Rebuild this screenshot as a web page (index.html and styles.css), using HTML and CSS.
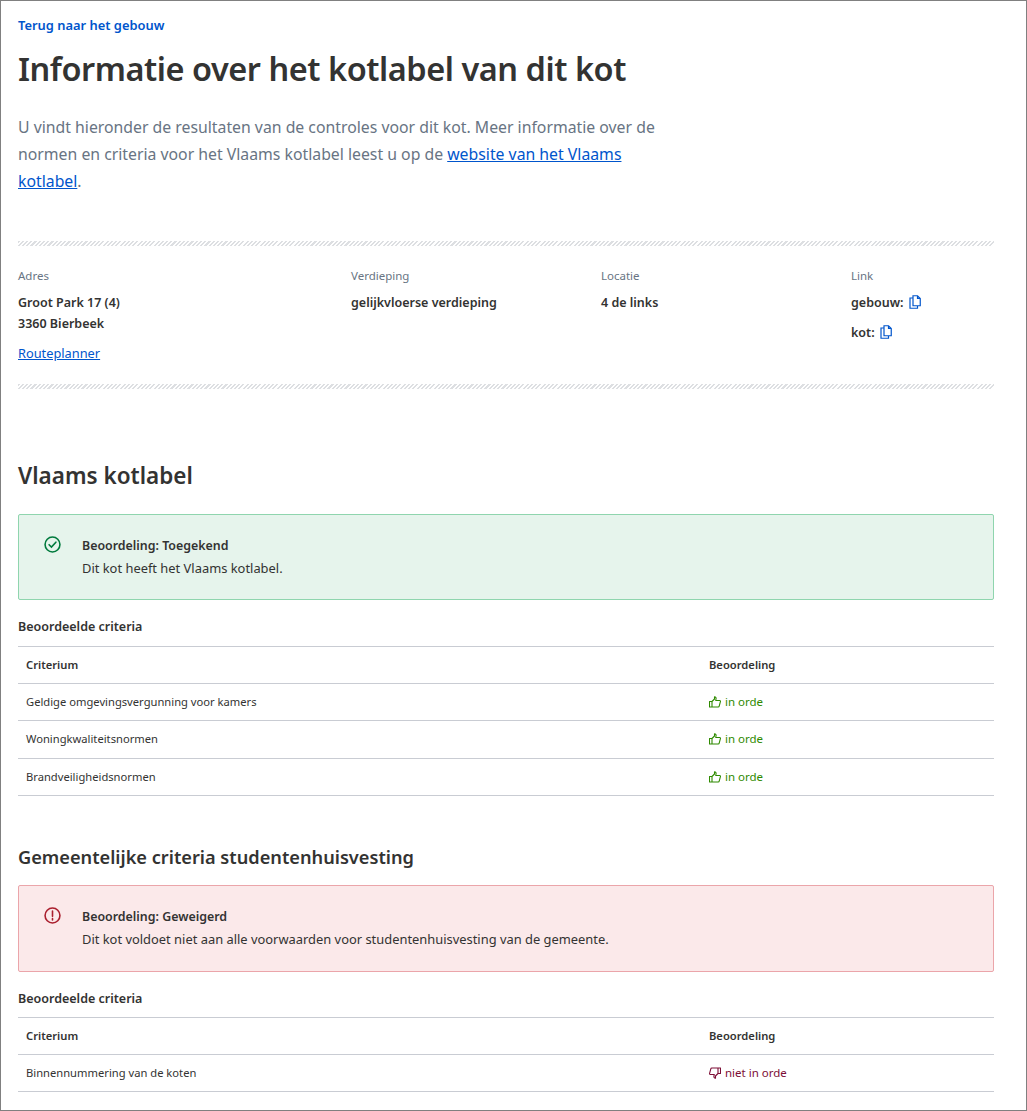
FILE: index.html
```html
<!DOCTYPE html>
<html lang="nl">
<head>
  <meta charset="UTF-8">
  <title>Informatie over het kotlabel van dit kot</title>
  <link rel="stylesheet" href="styles.css">
</head>
<body>
  <main class="page">
    <a class="back-link" href="#">Terug naar het gebouw</a>
    <h1>Informatie over het kotlabel van dit kot</h1>
    <p class="intro">U vindt hieronder de resultaten van de controles voor dit kot. Meer informatie over de normen en criteria voor het Vlaams kotlabel leest u op de <a href="#">website van het Vlaams kotlabel</a>.</p>

    <div class="hatch hatch-top"></div>
    <div class="meta">
      <div>
        <div class="meta-label">Adres</div>
        <div class="meta-value">Groot Park 17 (4)</div>
        <div class="meta-value meta-second">3360 Bierbeek</div>
        <a class="route" href="#">Routeplanner</a>
      </div>
      <div>
        <div class="meta-label">Verdieping</div>
        <div class="meta-value">gelijkvloerse verdieping</div>
      </div>
      <div>
        <div class="meta-label">Locatie</div>
        <div class="meta-value">4 de links</div>
      </div>
      <div>
        <div class="meta-label">Link</div>
        <div class="meta-value copy-row">gebouw:
          <svg class="copy" viewBox="0 0 12 14"><path d="M4 .75h4.5L11.25 3.5v7.25H4zM8.5.75V3.5h2.75M4 3H1v10.25h7.5v-2.5"/></svg>
        </div>
        <div class="meta-value copy-row copy-second">kot:
          <svg class="copy" viewBox="0 0 12 14"><path d="M4 .75h4.5L11.25 3.5v7.25H4zM8.5.75V3.5h2.75M4 3H1v10.25h7.5v-2.5"/></svg>
        </div>
      </div>
    </div>
    <div class="hatch"></div>

    <h2>Vlaams kotlabel</h2>
    <div class="alert alert-ok">
      <svg class="alert-icon" viewBox="0 0 16 16"><circle cx="8" cy="8" r="7"/><path d="M4.8 8.2l2.2 2.2 4.2-4.6"/></svg>
      <div>
        <div class="alert-title">Beoordeling: Toegekend</div>
        <div class="alert-text">Dit kot heeft het Vlaams kotlabel.</div>
      </div>
    </div>
    <h3>Beoordeelde criteria</h3>
    <table>
      <tr><th class="col-main">Criterium</th><th>Beoordeling</th></tr>
      <tr>
        <td>Geldige omgevingsvergunning voor kamers</td>
        <td class="good"><svg class="thumb" viewBox="0 0 12 12"><path d="M.5 5.5h2.5v5.5H.5zM3 5.5l2.5-2.5V.8c1.3 0 1.8 1 1.5 2.2L6.700 4.500h4c.7 0 .9.6.7 1.200l-1.200 4.500c-.1.500-.5.800-1 .8H3"/></svg> in orde</td>
      </tr>
      <tr>
        <td>Woningkwaliteitsnormen</td>
        <td class="good"><svg class="thumb" viewBox="0 0 12 12"><path d="M.5 5.5h2.5v5.5H.5zM3 5.5l2.5-2.5V.8c1.3 0 1.8 1 1.5 2.2L6.700 4.500h4c.7 0 .9.6.7 1.200l-1.200 4.500c-.1.500-.5.800-1 .8H3"/></svg> in orde</td>
      </tr>
      <tr>
        <td>Brandveiligheidsnormen</td>
        <td class="good"><svg class="thumb" viewBox="0 0 12 12"><path d="M.5 5.5h2.5v5.5H.5zM3 5.5l2.5-2.5V.8c1.3 0 1.8 1 1.5 2.2L6.700 4.500h4c.7 0 .9.6.7 1.200l-1.200 4.500c-.1.500-.5.800-1 .8H3"/></svg> in orde</td>
      </tr>
    </table>

    <h2 class="h2-small">Gemeentelijke criteria studentenhuisvesting</h2>
    <div class="alert alert-bad">
      <svg class="alert-icon" viewBox="0 0 16 16"><circle cx="8" cy="8" r="7"/><path d="M8 3.800v5M8 10.800v1.400"/></svg>
      <div>
        <div class="alert-title">Beoordeling: Geweigerd</div>
        <div class="alert-text">Dit kot voldoet niet aan alle voorwaarden voor studentenhuisvesting van de gemeente.</div>
      </div>
    </div>
    <h3>Beoordeelde criteria</h3>
    <table class="table-last">
      <tr><th class="col-main">Criterium</th><th>Beoordeling</th></tr>
      <tr>
        <td>Binnennummering van de koten</td>
        <td class="bad"><svg class="thumb" viewBox="0 0 12 12"><path d="M11.500 6.500H9V1h2.500zM9 6.500l-2.500 2.500v2.200c-1.300 0-1.800-1-1.500-2.200l.3-1.500h-4c-.7 0-.9-.6-.7-1.200L1.800 1.800c.1-.5.5-.8 1-.8H9"/></svg> niet in orde</td>
      </tr>
    </table>
  </main>
</body>
</html>
```

FILE: styles.css
```css
html, body {
  margin: 0;
  padding: 0;
}

body {
  font-family: "Noto Sans", sans-serif;
  color: #333332;
  background: #fff;
}

.page {
  box-sizing: border-box;
  width: 1027px;
  height: 1111px;
  overflow: hidden;
  border: 1px solid #808080;
  padding: 15px 32px 0 17px;
}

a {
  color: #0055cc;
}

.back-link {
  display: block;
  font-size: 12.9px;
  line-height: 18px;
  font-weight: 600;
  text-decoration: none;
}

h1 {
  margin: 13px 0 0;
  font-size: 32.5px;
  line-height: 44px;
  font-weight: 600;
  letter-spacing: -0.46px;
}

.intro {
  width: 660px;
  margin: 23px 0 0;
  font-size: 15.8px;
  line-height: 27px;
  color: #687483;
}

.hatch {
  height: 5px;
  background: repeating-linear-gradient(135deg, #dddfe2 0, #dddfe2 1.5px, #fff 1.5px, #fff 3px);
}

.hatch-top {
  margin-top: 46px;
}

.meta {
  display: grid;
  grid-template-columns: 333px 250px 250px 1fr;
  height: 138px;
}

.meta-label {
  margin-top: 22px;
  font-size: 11.5px;
  line-height: 16px;
  color: #687483;
}

.meta-value {
  margin-top: 10px;
  font-size: 12.5px;
  line-height: 18px;
  font-weight: 600;
}

.meta-second {
  margin-top: 3px;
}

.route {
  display: block;
  margin-top: 11px;
  font-size: 12.8px;
  line-height: 18px;
}

.copy-second {
  margin-top: 12px;
}

.copy {
  width: 12px;
  height: 14px;
  margin-left: 2px;
  vertical-align: -2px;
  fill: none;
  stroke: #0055cc;
  stroke-width: 1.2;
}

h2 {
  margin: 71px 0 0;
  font-size: 22.5px;
  line-height: 32px;
  font-weight: 600;
}

.h2-small {
  margin-top: 47px;
  font-size: 18.2px;
  line-height: 28px;
}

.alert {
  display: flex;
  box-sizing: border-box;
  height: 86px;
  margin-top: 22px;
  padding: 20px 24px 0 25px;
  border: 1px solid;
  border-radius: 2px;
  line-height: 22px;
}

.alert-ok {
  background: #e6f4ec;
  border-color: #8fd5ae;
}

.alert-bad {
  height: 87px;
  margin-top: 14px;
  background: #fbe9ea;
  border-color: #eba5aa;
}

.alert-icon {
  flex: none;
  width: 17px;
  height: 17px;
  margin: 1px 21px 0 0;
  fill: none;
  stroke-width: 1.5;
  stroke-linecap: round;
}

.alert-ok .alert-icon {
  stroke: #007a3d;
}

.alert-bad .alert-icon {
  stroke: #aa1f2e;
}

.alert-title {
  font-size: 12.4px;
  font-weight: 600;
}

.alert-text {
  font-size: 12.9px;
}

h3 {
  margin: 17px 0 0;
  font-size: 12.5px;
  line-height: 20px;
  font-weight: 600;
}

table {
  width: 100%;
  margin-top: 9px;
  border-collapse: collapse;
  border-top: 1px solid #c9ccd3;
  font-size: 11.2px;
  line-height: 18px;
}

.table-last {
  margin-top: 8px;
}

th, td {
  padding: 8.8px 8px 9.45px;
  text-align: left;
  border-bottom: 1px solid #c9ccd3;
}

th {
  font-weight: 600;
}

.col-main {
  width: 683px;
  box-sizing: border-box;
}

.thumb {
  width: 12px;
  height: 12px;
  margin-right: 1px;
  vertical-align: -2px;
  fill: none;
  stroke: currentColor;
  stroke-width: 1.1;
  stroke-linejoin: round;
}

.good, .bad {
  font-size: 11.5px;
}

.good {
  color: #2f8a00;
}

.bad {
  color: #7d0e36;
}
```
